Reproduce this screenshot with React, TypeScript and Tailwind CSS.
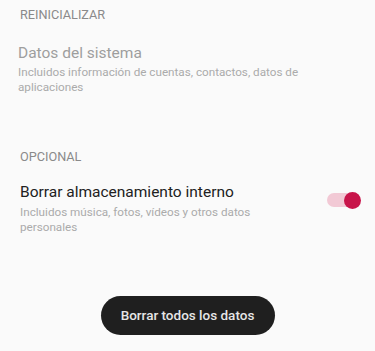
export default function App() {
  return (
    <div
      className="w-[375px] h-[351px] bg-[#fafafa] overflow-hidden flex flex-col"
      style={{ fontFamily: "Roboto, 'Noto Sans', sans-serif" }}
    >
      <div className="px-5 pt-[7px] text-[12.7px] leading-4 text-[#8a8a8a]">REINICIALIZAR</div>

      <div className="pl-[18px] pr-5 pt-[20px]">
        <div className="text-[15.5px] leading-5 text-[#9e9e9e]">Datos del sistema</div>
        <div className="mt-[2px] text-[11.7px] leading-[15px] text-[#ababab]">
          Incluidos información de cuentas, contactos, datos de aplicaciones
        </div>
      </div>

      <div className="px-5 pt-[54px] text-[12.7px] leading-4 text-[#8a8a8a]">OPCIONAL</div>

      <div className="flex items-start pl-5 pr-[14px] pt-[17px]">
        <div className="flex-1 pr-12">
          <div className="text-[15.5px] leading-5 text-[#212121]">Borrar almacenamiento interno</div>
          <div className="mt-[3px] text-[11.7px] leading-[15px] text-[#ababab]">
            Incluidos música, fotos, vídeos y otros datos personales
          </div>
        </div>
        <div className="relative w-[34px] h-5 mt-2 flex items-center">
          <div className="w-[32px] h-[14px] rounded-full bg-[#f2c9d5]" />
          <div className="absolute right-0 top-[1.5px] w-[17px] h-[17px] rounded-full bg-[#c8144a]" />
        </div>
      </div>

      <div className="flex justify-center pt-[61px]">
        <button className="w-[174px] h-[39px] rounded-full bg-[#1f1f1f] text-[#e6e6e6] text-[13.5px] font-medium">
          Borrar todos los datos
        </button>
      </div>
    </div>
  );
}
